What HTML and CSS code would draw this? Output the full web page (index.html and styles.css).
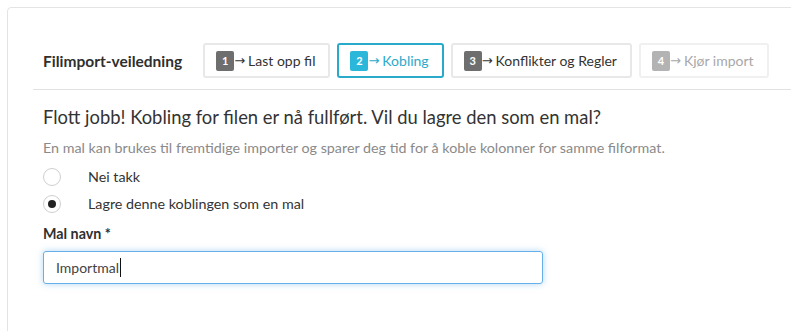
FILE: index.html
```html
<!DOCTYPE html>
<html lang="no">
<head>
<meta charset="utf-8">
<title>Filimport-veiledning</title>
<link rel="stylesheet" href="styles.css">
</head>
<body>
<div class="card">
  <div class="wizard">
    <div class="header">
      <h1 class="title">Filimport-veiledning</h1>
      <div class="steps">
        <div class="step"><span class="num">1</span><span class="arrow">→</span><span class="label">Last opp fil</span></div>
        <div class="step active"><span class="num">2</span><span class="arrow">→</span><span class="label">Kobling</span></div>
        <div class="step"><span class="num">3</span><span class="arrow">→</span><span class="label">Konflikter og Regler</span></div>
        <div class="step disabled"><span class="num">4</span><span class="arrow">→</span><span class="label">Kjør import</span></div>
      </div>
    </div>
    <div class="body">
      <h2 class="heading">Flott jobb! Kobling for filen er nå fullført. Vil du lagre den som en mal?</h2>
      <p class="hint">En mal kan brukes til fremtidige importer og sparer deg tid for å koble kolonner for samme filformat.</p>
      <div class="radio"><span class="circle"></span><span class="rlabel">Nei takk</span></div>
      <div class="radio"><span class="circle checked"></span><span class="rlabel">Lagre denne koblingen som en mal</span></div>
      <div class="field-label">Mal navn *</div>
      <div class="input"><span class="value">Importmal</span><span class="caret"></span></div>
    </div>
  </div>
</div>
</body>
</html>
```
FILE: styles.css
```css
html, body {
  margin: 0;
  padding: 0;
  background: #ffffff;
  overflow: hidden;
}
body {
  font-family: "Lato", "Liberation Sans", sans-serif;
  color: #333333;
  padding: 7px 0 0 7px;
}
.card {
  border: 1px solid #e4e4e4;
  border-radius: 4px 0 0 0;
  margin-right: -20px;
  height: 340px;
  padding: 0 0 0 25px;
  box-sizing: border-box;
}
.wizard {
  padding-top: 35px;
}
.header {
  display: flex;
  align-items: center;
  padding: 0 0 11px 10px;
  border-bottom: 1px solid #e2e2e2;
}
.title {
  margin: 0;
  font-size: 15.5px;
  font-weight: 700;
  color: #2f2f2f;
  margin-right: 21px;
}
.steps {
  display: flex;
  gap: 7px;
}
.step {
  display: flex;
  align-items: center;
  height: 35px;
  box-sizing: border-box;
  border: 2px solid #e8e8e8;
  border-radius: 3px;
  padding: 0 13px 0 11px;
  font-size: 14px;
  color: #333333;
}
.num {
  display: inline-flex;
  align-items: center;
  justify-content: center;
  width: 18px;
  height: 20px;
  border-radius: 2px;
  background: #6e6e6e;
  color: #ffffff;
  font-size: 11px;
  font-weight: 700;
}
.arrow {
  font-family: "DejaVu Sans", sans-serif;
  font-size: 13px;
  margin: 0 3px 0 0;
}
.step.active {
  border-color: #2aaacb;
  color: #2aaacb;
}
.step.active .num {
  background: #2ab7d9;
}
.step.disabled {
  border-color: #f0f0f0;
  color: #a8a8a8;
}
.step.disabled .num {
  background: #b3b3b3;
}
.body {
  padding: 16px 0 0 10px;
}
.heading {
  margin: 0;
  font-size: 18.4px;
  font-weight: 400;
  color: #333333;
}
.hint {
  margin: 11px 0 7px;
  font-size: 14.3px;
  color: #8a8a8a;
}
.radio {
  display: flex;
  align-items: center;
  height: 27px;
  font-size: 14.3px;
}
.circle {
  width: 18px;
  height: 18px;
  border: 1px solid #cfcfcf;
  border-radius: 50%;
  box-sizing: border-box;
  display: inline-flex;
  align-items: center;
  justify-content: center;
  margin-right: 27px;
}
.circle.checked::after {
  content: "";
  width: 8px;
  height: 8px;
  border-radius: 50%;
  background: #222222;
}
.field-label {
  margin-top: 8px;
  font-size: 14.3px;
  font-weight: 700;
  color: #2f2f2f;
}
.input {
  margin-top: 9px;
  width: 500px;
  height: 33px;
  box-sizing: border-box;
  border: 1px solid #66afe9;
  border-radius: 3px;
  box-shadow: 0 0 6px rgba(102, 175, 233, 0.5);
  display: flex;
  align-items: center;
  padding-left: 12px;
  font-size: 14px;
  color: #444444;
}
.caret {
  width: 1px;
  height: 19px;
  background: #111111;
  margin-left: 1px;
}
```
